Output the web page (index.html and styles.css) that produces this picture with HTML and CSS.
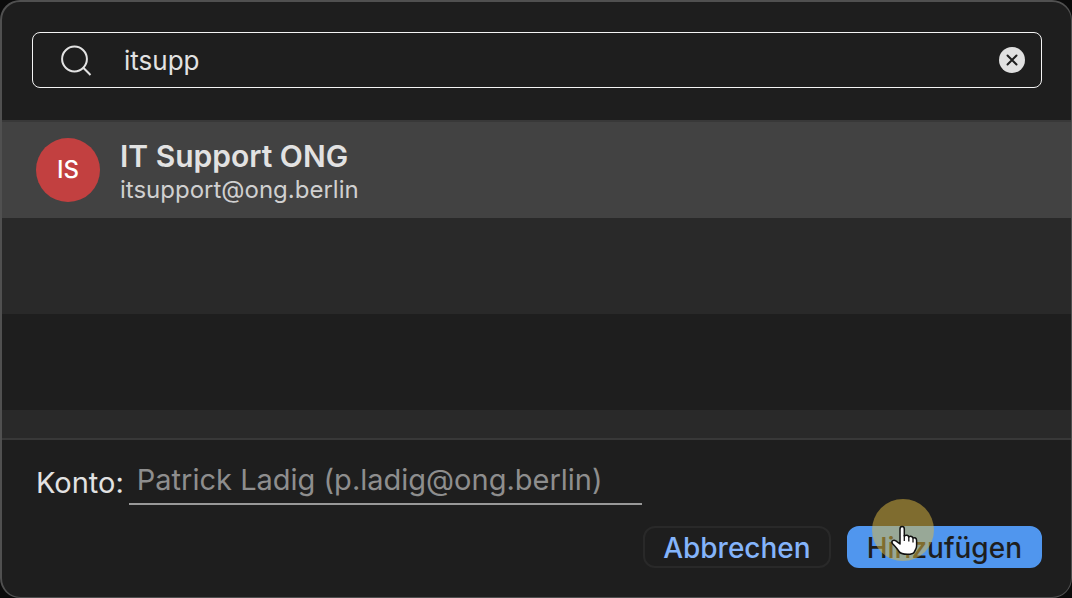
FILE: index.html
```html
<!DOCTYPE html>
<html lang="de">
<head>
<meta charset="utf-8">
<meta name="viewport" content="width=device-width, initial-scale=1">
<title>Person hinzufügen</title>
<link rel="stylesheet" href="styles.css">
</head>
<body>
<main class="dialog">
  <div class="search-area">
    <div class="search-field">
      <svg class="search-icon" viewBox="0 0 32 32" aria-hidden="true"><circle cx="13.5" cy="15" r="12.4"/><path d="M22.3 23.8 29.5 31"/></svg>
      <input class="search-input" type="text" value="itsupp" aria-label="Suchen">
      <button class="clear-button" type="button" aria-label="Eingabe löschen">
        <svg class="clear-icon" viewBox="0 0 26 26" aria-hidden="true"><path d="M8.5 8.5 17.5 17.5M17.5 8.5 8.5 17.5"/></svg>
      </button>
    </div>
  </div>
  <ul class="results">
    <li class="row row-selected">
      <span class="avatar">IS</span>
      <div class="person">
        <div class="person-name">IT Support ONG</div>
        <div class="person-mail">itsupport@ong.berlin</div>
      </div>
    </li>
    <li class="row row-alt"></li>
    <li class="row"></li>
    <li class="row row-alt row-cut"></li>
  </ul>
  <form class="footer">
    <div class="account">
      <label class="account-label" for="account">Konto:</label>
      <select class="account-select" id="account" disabled>
        <option>Patrick Ladig (p.ladig@ong.berlin)</option>
      </select>
    </div>
    <div class="actions">
      <button class="button button-cancel" type="button">Abbrechen</button>
      <button class="button button-add" type="button">Hinzufügen
        <svg class="pointer" viewBox="0 0 62 62" aria-hidden="true">
          <circle class="pointer-halo" cx="31" cy="31" r="31"/>
          <path class="pointer-hand" d="M28 44V30C28 26.8 32.3 26.8 32.3 30V37C34 35.6 36.5 36 36.8 38C38.5 36.7 40.6 37.4 41 39.2C42.8 38.2 44.6 39 44.6 41.4V47C44.6 50 42.8 51.5 42.3 53C41.7 55 39.5 55.3 35.5 55.3C31 55.3 28.5 55 27 52.5C25.5 50 23.3 47.7 20.6 44.8C18.6 42.2 21.4 40.2 23.9 41.8L28 45Z"/>
          <path class="pointer-lines" d="M32.3 36V42M36.8 38V42.5M41 39.2V43.5"/>
        </svg>
      </button>
    </div>
  </form>
</main>
</body>
</html>
```
FILE: styles.css
```css
* {
  box-sizing: border-box;
}

body {
  margin: 0;
  background: #0b0b0b;
  color: #e2e2e2;
  font-family: Inter, "Noto Sans", sans-serif;
}

.dialog {
  display: flex;
  flex-direction: column;
  min-height: 100vh;
  overflow: hidden;
  background: #1e1e1e;
  border: 2px solid #505050;
  border-right-width: 1px;
  border-bottom-width: 1px;
  border-radius: 20px;
}

.search-area {
  padding: 30px 29px 32px 30px;
}

.search-field {
  display: flex;
  align-items: center;
  height: 56px;
  padding: 0 16px 0 28px;
  border: 1px solid #f4f4f4;
  border-radius: 8px;
}

.search-icon {
  flex: none;
  width: 32px;
  height: 32px;
  fill: none;
  stroke: #e2e2e2;
  stroke-width: 2;
}

.search-input {
  flex: 1;
  min-width: 0;
  margin-left: 31px;
  padding: 2px 0 0;
  border: 0;
  outline: 0;
  background: none;
  color: #e2e2e2;
  font: 400 26px/32px Inter, "Noto Sans", sans-serif;
}

.clear-button {
  flex: none;
  width: 26px;
  height: 26px;
  padding: 0;
  border: 0;
  border-radius: 50%;
  background: #e0e0e0;
}

.clear-icon {
  display: block;
  fill: none;
  stroke: #1e1e1e;
  stroke-width: 2;
  stroke-linecap: round;
}

.results {
  margin: 0;
  padding: 0;
  list-style: none;
  border-top: 2px solid #383838;
  border-bottom: 2px solid #383838;
}

.row {
  display: flex;
  align-items: center;
  gap: 20px;
  height: 96px;
  padding: 0 34px;
}

.row-selected {
  background: #424242;
}

.row-alt {
  background: #292929;
}

.row-cut {
  height: 28px;
}

.avatar {
  display: flex;
  flex: none;
  align-items: center;
  justify-content: center;
  width: 64px;
  height: 64px;
  padding-bottom: 2px;
  border-radius: 50%;
  background: #c24040;
  color: #fff;
  font-size: 24px;
  font-weight: 500;
}

.person {
  padding-top: 3px;
}

.person-name {
  font-size: 30px;
  font-weight: 600;
  line-height: 36px;
}

.person-mail {
  color: #d0d0d0;
  font-size: 24px;
  line-height: 32px;
}

.footer {
  padding: 20px 29px 29px 34px;
}

.account {
  display: flex;
  align-items: flex-start;
  gap: 5px;
}

.account-label {
  font-size: 29px;
  line-height: 46px;
}

.account-select {
  width: 51%;
  height: 45px;
  padding: 0 8px 4px;
  appearance: none;
  border: 0;
  border-bottom: 2px solid #999;
  border-radius: 0;
  background: none;
  color: #8e8e8e;
  opacity: 1;
  font: 400 29px/36px Inter, "Noto Sans", sans-serif;
}

.actions {
  display: flex;
  justify-content: flex-end;
  gap: 16px;
  margin-top: 20px;
}

.button {
  position: relative;
  height: 42px;
  padding: 2px 18px 0;
  border: 2px solid #292929;
  border-radius: 12px;
  font: 500 28px/36px Inter, "Noto Sans", sans-serif;
}

.button-cancel {
  background: #1e1e1e;
  color: #84b4fb;
}

.button-add {
  border-color: #5096ee;
  background: #5096ee;
  color: #1e1e1e;
}

.pointer {
  position: absolute;
  top: -29px;
  left: 23px;
  width: 62px;
  height: 62px;
}

.pointer-halo {
  fill: #e0ba40;
  fill-opacity: 0.5;
}

.pointer-hand {
  fill: #fff;
  stroke: #111;
  stroke-width: 1.5;
  stroke-linejoin: round;
}

.pointer-lines {
  fill: none;
  stroke: #111;
  stroke-width: 1.3;
}
```
